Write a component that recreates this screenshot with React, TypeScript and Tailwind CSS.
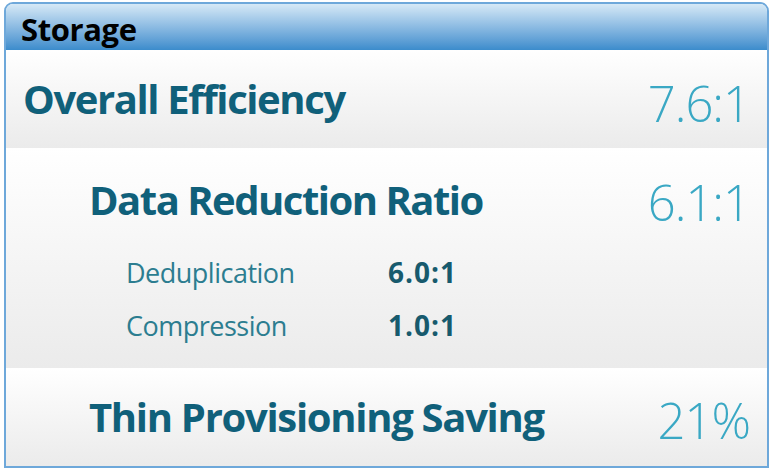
import React from "react";

const font = { fontFamily: '"Open Sans", "Noto Sans", sans-serif' };

export default function App() {
  return (
    <div className="w-[773px] h-[475px] bg-white pt-[2px] px-[4px]" style={font}>
      <div className="h-[466px] border-2 border-[#6ea8da] rounded-tl-[9px] rounded-tr-[9px] overflow-hidden flex flex-col">
        {/* Panel title bar */}
        <div className="h-[46px] shrink-0 bg-gradient-to-b from-[#d6e9f6] to-[#3b8ccc] flex items-end pl-[15px] pb-[2px]">
          <span className="text-[31px] font-bold text-black leading-none tracking-[-0.4px] pb-[3px]">Storage</span>
        </div>

        {/* Overall efficiency */}
        <div className="h-[98px] shrink-0 bg-gradient-to-b from-white to-[#ebebeb] flex items-center justify-between pl-[17px] pr-[17px]">
          <span className="text-[40px] font-bold text-[#10607a] tracking-[-1.4px] leading-none">Overall Efficiency</span>
          <span className="text-[49px] font-light text-[#3aa8c4] leading-none pt-[8px] tracking-[-1px]">7.6:1</span>
        </div>

        {/* Data reduction */}
        <div className="h-[220px] shrink-0 bg-gradient-to-b from-white to-[#ebebeb] flex flex-col pl-[83px] pr-[17px]">
          <div className="flex items-center justify-between pt-[24px]">
            <span className="text-[40px] font-bold text-[#10607a] tracking-[-1.5px] leading-none">Data Reduction Ratio</span>
            <span className="text-[49px] font-light text-[#3aa8c4] leading-none pt-[6px] tracking-[-1px]">6.1:1</span>
          </div>
          <div className="grid grid-cols-[262px_auto] items-center pl-[37px] mt-[31px] gap-y-[25px]">
            <span className="text-[27px] text-[#2c7d90] leading-none tracking-[-0.5px]">Deduplication</span>
            <span className="text-[28px] font-bold text-[#175a6d] leading-none tracking-[1px]">6.0:1</span>
            <span className="text-[27px] text-[#2c7d90] leading-none tracking-[-0.5px]">Compression</span>
            <span className="text-[28px] font-bold text-[#175a6d] leading-none tracking-[1px]">1.0:1</span>
          </div>
        </div>

        {/* Thin provisioning */}
        <div className="flex-1 bg-gradient-to-b from-white to-[#ebebeb] flex items-center justify-between pl-[83px] pr-[17px]">
          <span className="text-[40px] font-bold text-[#10607a] tracking-[-1.3px] leading-none">Thin Provisioning Saving</span>
          <span className="text-[49px] font-light text-[#3aa8c4] leading-none pt-[6px] tracking-[-1px]">21%</span>
        </div>
      </div>
    </div>
  );
}
